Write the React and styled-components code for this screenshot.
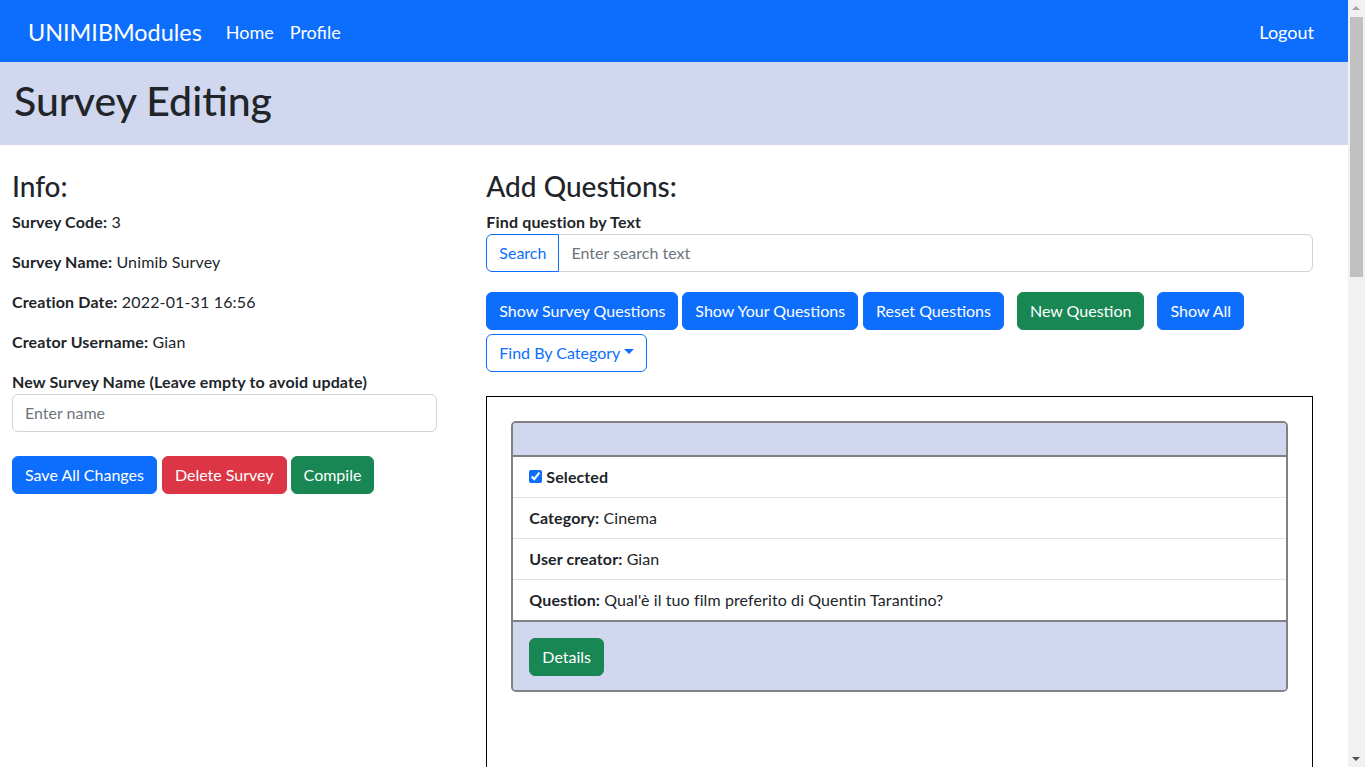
import React from "react";
import styled, { createGlobalStyle, css } from "styled-components";

const Global = createGlobalStyle`
  html, body { margin: 0; padding: 0; }
  body {
    margin-right: 17px;
    font-family: Lato, "Liberation Sans", sans-serif;
    font-size: 16px;
    line-height: 1.5;
    color: #212529;
    background: #fff;
  }
  * { box-sizing: border-box; }
`;

const Navbar = styled.nav`
  height: 62px;
  background: #0d6efd;
  display: flex;
  align-items: center;
  padding: 3px 26px 0 28px;
`;

const Brand = styled.a`
  font-size: 23.4px;
  color: #fff;
  margin-right: 16px;
  text-decoration: none;
`;

const NavLink = styled.a`
  font-size: 18px;
  color: #fff;
  padding: 0 8px;
  text-decoration: none;
  ${(p) => p.$push && css`margin-left: auto;`}
`;

const Header = styled.header`
  background: #d0d7ee;
  padding: 15px 14px 20px;
`;

const Title = styled.h1`
  margin: 0;
  font-size: 41px;
  font-weight: 500;
  line-height: 48px;
`;

const Main = styled.main`
  display: flex;
  padding-top: 25px;
`;

const LeftCol = styled.section`
  width: 33.3333%;
  flex: none;
  padding: 0 12px;
`;

const RightCol = styled.section`
  flex: 1;
  min-width: 0;
  padding: 0 35px 0 37px;
`;

const SectionTitle = styled.h3`
  margin: 0 0 6px;
  font-size: 28px;
  font-weight: 500;
  line-height: 1.2;
`;

const InfoLine = styled.p`
  margin: 0 0 16px;
  letter-spacing: 0.15px;
`;

const Label = styled.label`
  display: block;
  font-weight: 700;
  letter-spacing: 0.15px;
`;

const TextInput = styled.input`
  display: block;
  width: 100%;
  height: 38px;
  padding: 6px 12px;
  font: inherit;
  color: #212529;
  border: 1px solid #ced4da;
  border-radius: 6px;
  background: #fff;
  outline: none;
  &::placeholder { color: #6c757d; }
  ${(p) => p.$grouped && css`
    flex: 1;
    width: auto;
    min-width: 0;
    margin-left: -1px;
    border-top-left-radius: 0;
    border-bottom-left-radius: 0;
  `}
`;

const variants = {
  primary: css`background: #0d6efd; border-color: #0d6efd; color: #fff;`,
  danger: css`background: #dc3545; border-color: #dc3545; color: #fff;`,
  success: css`background: #198754; border-color: #198754; color: #fff;`,
  outline: css`background: #fff; border-color: #0d6efd; color: #0d6efd;`,
};

const Button = styled.button`
  display: inline-flex;
  align-items: center;
  height: 38px;
  padding: 6px 12px;
  font: inherit;
  line-height: 1.5;
  border: 1px solid;
  border-radius: 6px;
  cursor: pointer;
  white-space: nowrap;
  margin-right: ${(p) => p.$mr || 0}px;
  ${(p) => variants[p.$variant || "primary"]}
  ${(p) => p.$grouped && css`
    position: relative;
    z-index: 1;
    border-top-right-radius: 0;
    border-bottom-right-radius: 0;
  `}
  ${(p) => p.$caret && css`
    &::after {
      content: "";
      display: inline-block;
      margin-left: 4px;
      margin-top: -2px;
      border-top: 5px solid;
      border-left: 5px solid transparent;
      border-right: 5px solid transparent;
    }
  `}
`;

const ButtonRow = styled.div`
  display: flex;
  flex-wrap: wrap;
  row-gap: 4px;
  margin-top: ${(p) => p.$mt || 0}px;
`;

const InputGroup = styled.div`
  display: flex;
`;

const Box = styled.div`
  margin-top: 24px;
  border: 1px solid #000;
  padding: 24px;
  min-height: 1700px;
`;

const Card = styled.div`
  border: 2px solid #818181;
  border-radius: 5px;
  overflow: hidden;
`;

const CardHeader = styled.div`
  height: 34px;
  background: #d0d7ee;
  border-bottom: 2px solid #818181;
`;

const ListItem = styled.div`
  display: flex;
  align-items: center;
  padding: 8px 16px;
  border-bottom: 1px solid #dee2e6;
  letter-spacing: 0.1px;
  &:last-child { border-bottom: none; }
`;

const CardFooter = styled.div`
  background: #d0d7ee;
  border-top: 2px solid #818181;
  padding: 16px 16px 14px;
`;

const Check = styled.input`
  width: 13px;
  height: 13px;
  margin: 0 4px 0 0;
  accent-color: #0d6efd;
`;

/* Browser scrollbar as seen in the screenshot (overlays the page edge) */
const Scrollbar = styled.div`
  position: fixed;
  top: 0;
  right: 0;
  width: 17px;
  height: 100vh;
  background: #f1f1f1;
`;

const ScrollThumb = styled.div`
  position: absolute;
  left: 2px;
  right: 2px;
  top: 17px;
  height: 260px;
  background: #c1c1c1;
`;

const ScrollArrow = styled.div`
  position: absolute;
  left: 4px;
  width: 0;
  height: 0;
  border-left: 4px solid transparent;
  border-right: 4px solid transparent;
  ${(p) =>
    p.$down
      ? css`bottom: 6px; border-top: 4px solid #505050;`
      : css`top: 6px; border-bottom: 4px solid #a3a3a3;`}
`;

export default function App() {
  return (
    <>
      <Global />
      <Navbar>
        <Brand>UNIMIBModules</Brand>
        <NavLink>Home</NavLink>
        <NavLink>Profile</NavLink>
        <NavLink $push>Logout</NavLink>
      </Navbar>
      <Header>
        <Title>Survey Editing</Title>
      </Header>
      <Main>
        <LeftCol>
          <SectionTitle>Info:</SectionTitle>
          <InfoLine><strong>Survey Code:</strong> 3</InfoLine>
          <InfoLine><strong>Survey Name:</strong> Unimib Survey</InfoLine>
          <InfoLine><strong>Creation Date:</strong> 2022-01-31 16:56</InfoLine>
          <InfoLine><strong>Creator Username:</strong> Gian</InfoLine>
          <Label>New Survey Name (Leave empty to avoid update)</Label>
          <TextInput placeholder="Enter name" />
          <ButtonRow $mt={24}>
            <Button $mr={5}>Save All Changes</Button>
            <Button $variant="danger" $mr={4}>Delete Survey</Button>
            <Button $variant="success">Compile</Button>
          </ButtonRow>
        </LeftCol>
        <RightCol>
          <SectionTitle>Add Questions:</SectionTitle>
          <Label>Find question by Text</Label>
          <InputGroup>
            <Button $variant="outline" $grouped>Search</Button>
            <TextInput $grouped placeholder="Enter search text" />
          </InputGroup>
          <ButtonRow $mt={20}>
            <Button $mr={4}>Show Survey Questions</Button>
            <Button $mr={5}>Show Your Questions</Button>
            <Button $mr={13}>Reset Questions</Button>
            <Button $variant="success" $mr={13}>New Question</Button>
            <Button $mr={4}>Show All</Button>
            <Button $variant="outline" $caret>Find By Category</Button>
          </ButtonRow>
          <Box>
            <Card>
              <CardHeader />
              <div>
                <ListItem>
                  <Check type="checkbox" checked readOnly />
                  <strong>Selected</strong>
                </ListItem>
                <ListItem><span><strong>Category:</strong> Cinema</span></ListItem>
                <ListItem><span><strong>User creator:</strong> Gian</span></ListItem>
                <ListItem><span><strong>Question:</strong> Qual'è il tuo film preferito di Quentin Tarantino?</span></ListItem>
              </div>
              <CardFooter>
                <Button $variant="success">Details</Button>
              </CardFooter>
            </Card>
          </Box>
        </RightCol>
      </Main>
      <Scrollbar>
        <ScrollArrow />
        <ScrollThumb />
        <ScrollArrow $down />
      </Scrollbar>
    </>
  );
}
